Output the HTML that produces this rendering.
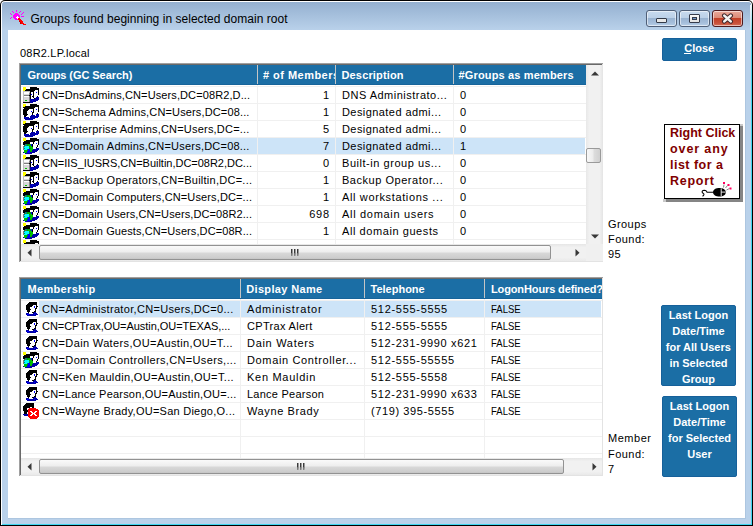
<!DOCTYPE html><html><head><meta charset="utf-8"><style>html,body{margin:0;padding:0;width:753px;height:526px;overflow:hidden;background:#fff}</style></head><body><div style="position:absolute;left:0;top:0;width:753px;height:526px;overflow:hidden">
<div style="position:absolute;left:0px;top:0px;width:753px;height:526px;background:#000;border-radius:5px 5px 0 0"></div>
<div style="position:absolute;left:1px;top:1px;width:751px;height:524px;background:#fff;border-radius:4px 4px 0 0"></div>
<div style="position:absolute;left:2px;top:2px;width:749px;height:522px;background:#b9d1ea;border-radius:3px 3px 0 0"></div>
<div style="position:absolute;left:2px;top:2px;width:749px;height:28px;background:linear-gradient(#94b0d0,#b9d1ea);border-radius:3px 3px 0 0"></div>
<div style="position:absolute;left:751px;top:30px;width:1px;height:495px;background:#3fd6f0"></div>
<div style="position:absolute;left:751px;top:5px;width:1px;height:25px;background:linear-gradient(#e8f6fa,#6fdcf0)"></div>
<div style="position:absolute;left:750px;top:5px;width:1px;height:25px;background:linear-gradient(rgba(255,255,255,.9),rgba(255,255,255,.3))"></div>
<div style="position:absolute;left:2px;top:524px;width:750px;height:1px;background:#3fd6f0"></div>
<div style="position:absolute;left:752px;top:6px;width:1px;height:520px;background:#000"></div>
<div style="position:absolute;left:8px;top:30px;width:737px;height:488px;background:#fff"></div>
<div style="position:absolute;left:745px;top:30px;width:1px;height:489px;background:#adc6e0"></div>
<div style="position:absolute;left:8px;top:518px;width:738px;height:1px;background:#adc6e0"></div>
<svg style="position:absolute;left:9px;top:10px" width="17" height="15" viewBox="0 0 17 15" shape-rendering="crispEdges"><path fill="#ff00ff" d="M7 0h1v1h-1zM3 1h1v1h-1zM7 1h1v1h-1zM11 1h1v1h-1zM4 2h1v1h-1zM10 2h1v1h-1zM14 2h1v1h-1zM1 3h1v1h-1zM6 3h3v1h-3zM13 3h1v1h-1zM2 4h1v1h-1zM5 4h5v1h-5zM12 4h1v1h-1zM4 5h7v1h-7zM4 6h4v1h-4zM9 6h2v1h-2zM12 6h3v1h-3zM2 7h1v1h-1zM4 7h3v1h-3zM10 7h1v1h-1zM1 8h1v1h-1zM5 8h3v1h-3zM6 9h3v1h-3z"/><path fill="#ffffff" d="M8 6h1v1h-1zM7 7h3v1h-3zM8 8h1v1h-1z"/><path fill="#ff0000" d="M9 8h2v1h-2zM9 9h3v1h-3zM10 10h3v1h-3zM11 11h3v1h-3zM12 12h2v1h-2zM12 13h3v1h-3zM14 14h3v1h-3z"/><path fill="#c00000" d="M10 11h1v1h-1zM11 12h1v1h-1zM11 13h1v1h-1z"/></svg>
<div style="position:absolute;left:30.50px;top:12px;font:12px/14px 'Liberation Sans', sans-serif;color:#000;white-space:nowrap;letter-spacing:0.033px;">Groups found beginning in selected domain root</div>
<div style="position:absolute;left:646px;top:10px;width:31px;height:17px;box-sizing:border-box;border:1px solid #4f5f78;border-radius:3px;background:linear-gradient(#c8dbef 0%,#bcd1e8 45%,#9ab4d2 50%,#a6bfdc 80%,#b8cfe8 100%);box-shadow:inset 0 0 0 1px rgba(255,255,255,0.55)"></div>
<div style="position:absolute;left:679px;top:10px;width:31px;height:17px;box-sizing:border-box;border:1px solid #4f5f78;border-radius:3px;background:linear-gradient(#c8dbef 0%,#bcd1e8 45%,#9ab4d2 50%,#a6bfdc 80%,#b8cfe8 100%);box-shadow:inset 0 0 0 1px rgba(255,255,255,0.55)"></div>
<div style="position:absolute;left:712px;top:10px;width:31px;height:17px;box-sizing:border-box;border:1px solid #4d1a1e;border-radius:3px;background:linear-gradient(#e9a99b 0%,#dc8b78 45%,#c24128 50%,#c8503a 80%,#d6705a 100%);box-shadow:inset 0 0 0 1px rgba(255,255,255,0.55)"></div>
<div style="position:absolute;left:656px;top:18px;width:11px;height:5px;box-sizing:border-box;border:1px solid #333a48;border-radius:1px;background:#e8e8e8"></div>
<div style="position:absolute;left:689px;top:14px;width:11px;height:9px;box-sizing:border-box;border:1px solid #363c4c;border-radius:1px;background:linear-gradient(#fafafa,#e2e2e2)"></div>
<div style="position:absolute;left:692px;top:17px;width:5px;height:3px;background:#7096c4;box-sizing:border-box;border:1px solid #363c4c"></div>
<svg style="position:absolute;left:721px;top:13px" width="13" height="11" viewBox="0 0 13 11">
<path d="M3.3 2.6 L9.7 8.4 M9.7 2.6 L3.3 8.4" stroke="#40282c" stroke-width="4.6" stroke-linecap="round"/>
<path d="M3.3 2.6 L9.7 8.4 M9.7 2.6 L3.3 8.4" stroke="#f4f4f4" stroke-width="2.6" stroke-linecap="round"/>
</svg>
<div style="position:absolute;left:20.00px;top:46px;font:11px/14px 'Liberation Sans', sans-serif;color:#000;white-space:nowrap;letter-spacing:0.203px;">08R2.LP.local</div>
<div style="position:absolute;left:19px;top:63px;width:584px;height:199px;background:#fff"></div>
<div style="position:absolute;left:19px;top:63px;width:584px;height:1px;background:#a0a0a0"></div>
<div style="position:absolute;left:19px;top:63px;width:1px;height:199px;background:#a0a0a0"></div>
<div style="position:absolute;left:20px;top:64px;width:583px;height:1px;background:#696969"></div>
<div style="position:absolute;left:20px;top:64px;width:1px;height:198px;background:#696969"></div>
<div style="position:absolute;left:602px;top:64px;width:1px;height:198px;background:#e3e3e3"></div>
<div style="position:absolute;left:20px;top:261px;width:583px;height:1px;background:#e3e3e3"></div>
<div style="position:absolute;left:21px;top:65px;width:565px;height:20px;background:#1b6ea5"></div>
<div style="position:absolute;left:21px;top:84px;width:565px;height:1px;background:#17649a"></div>
<div style="position:absolute;left:21px;top:86px;width:565px;height:1px;background:#f0f0f0"></div>
<div style="position:absolute;left:21px;top:103px;width:565px;height:1px;background:#f0f0f0"></div>
<div style="position:absolute;left:21px;top:120px;width:565px;height:1px;background:#f0f0f0"></div>
<div style="position:absolute;left:21px;top:137px;width:565px;height:1px;background:#f0f0f0"></div>
<div style="position:absolute;left:21px;top:154px;width:565px;height:1px;background:#f0f0f0"></div>
<div style="position:absolute;left:21px;top:171px;width:565px;height:1px;background:#f0f0f0"></div>
<div style="position:absolute;left:21px;top:188px;width:565px;height:1px;background:#f0f0f0"></div>
<div style="position:absolute;left:21px;top:205px;width:565px;height:1px;background:#f0f0f0"></div>
<div style="position:absolute;left:21px;top:222px;width:565px;height:1px;background:#f0f0f0"></div>
<div style="position:absolute;left:21px;top:239px;width:565px;height:1px;background:#f0f0f0"></div>
<div style="position:absolute;left:39px;top:138px;width:546px;height:16px;background:#cde4f8"></div>
<div style="position:absolute;left:257px;top:85px;width:1px;height:159px;background:#f0f0f0"></div>
<div style="position:absolute;left:257px;top:65px;width:1px;height:19px;background:#c5c5c5"></div>
<div style="position:absolute;left:335px;top:85px;width:1px;height:159px;background:#f0f0f0"></div>
<div style="position:absolute;left:335px;top:65px;width:1px;height:19px;background:#c5c5c5"></div>
<div style="position:absolute;left:453px;top:85px;width:1px;height:159px;background:#f0f0f0"></div>
<div style="position:absolute;left:453px;top:65px;width:1px;height:19px;background:#c5c5c5"></div>
<div style="position:absolute;left:21px;top:65px;width:236px;height:19px;overflow:hidden">
<div style="position:absolute;left:6.60px;top:3px;font:bold 11px/14px 'Liberation Sans', sans-serif;color:#fff;white-space:nowrap;letter-spacing:-0.061px;">Groups (GC Search)</div>
</div>
<div style="position:absolute;left:258px;top:65px;width:77px;height:19px;overflow:hidden">
<div style="position:absolute;left:5.00px;top:3px;font:bold 11px/14px 'Liberation Sans', sans-serif;color:#fff;white-space:nowrap;letter-spacing:0.463px;"># of Members</div>
</div>
<div style="position:absolute;left:336px;top:65px;width:117px;height:19px;overflow:hidden">
<div style="position:absolute;left:5.50px;top:3px;font:bold 11px/14px 'Liberation Sans', sans-serif;color:#fff;white-space:nowrap;letter-spacing:0.149px;">Description</div>
</div>
<div style="position:absolute;left:454px;top:65px;width:132px;height:19px;overflow:hidden">
<div style="position:absolute;left:4.60px;top:3px;font:bold 11px/14px 'Liberation Sans', sans-serif;color:#fff;white-space:nowrap;letter-spacing:0.148px;">#Groups as members</div>
</div>
<div style="position:absolute;left:21px;top:87px;width:565px;height:157px;overflow:hidden">
<svg style="position:absolute;left:2px;top:0px" width="16" height="16" viewBox="0 0 16 16" shape-rendering="crispEdges"><path fill="#ffff00" d="M0 0h3v1h-3zM0 1h3v1h-3zM0 2h3v1h-3zM0 3h2v1h-2z"/><path fill="#000000" d="M7 0h7v1h-7zM7 1h9v1h-9zM3 2h13v1h-13zM2 3h10v1h-10zM15 3h1v1h-1zM7 4h4v1h-4zM15 4h1v1h-1zM7 5h1v1h-1zM10 5h1v1h-1zM15 5h1v1h-1zM7 6h1v1h-1zM10 6h1v1h-1zM15 6h1v1h-1zM7 7h1v1h-1zM10 7h1v1h-1zM15 7h1v1h-1zM6 8h2v1h-2zM10 8h1v1h-1zM7 9h1v1h-1zM9 9h2v1h-2zM14 9h1v1h-1zM7 10h1v1h-1zM10 10h1v1h-1zM7 11h1v1h-1zM11 11h1v1h-1zM0 15h7v1h-7z"/><path fill="#ffffff" d="M12 3h3v1h-3zM11 4h4v1h-4zM1 5h5v1h-5zM8 5h2v1h-2zM11 5h2v1h-2zM14 5h1v1h-1zM1 6h5v1h-5zM8 6h2v1h-2zM11 6h4v1h-4zM9 7h1v1h-1zM11 7h4v1h-4zM8 8h2v1h-2zM11 8h4v1h-4zM1 9h5v1h-5zM8 9h1v1h-1zM11 9h3v1h-3zM8 10h2v1h-2zM11 10h2v1h-2zM8 11h3v1h-3z"/><path fill="#c0c0c0" d="M0 4h7v1h-7zM0 5h1v1h-1zM6 5h1v1h-1zM0 6h1v1h-1zM0 7h1v1h-1zM0 8h1v1h-1zM0 9h1v1h-1zM0 10h1v1h-1zM0 11h1v1h-1zM0 12h1v1h-1zM0 13h1v1h-1zM0 14h1v1h-1z"/><path fill="#0000ff" d="M13 5h1v1h-1zM8 7h1v1h-1zM9 13h1v1h-1z"/><path fill="#808080" d="M6 6h1v1h-1zM6 7h1v1h-1zM1 8h5v1h-5zM6 9h1v1h-1zM6 10h1v1h-1zM6 11h1v1h-1zM6 12h1v1h-1zM6 13h1v1h-1zM6 14h1v1h-1z"/><path fill="#d8d8d8" d="M1 7h5v1h-5zM1 10h5v1h-5zM1 11h5v1h-5zM1 12h5v1h-5zM1 13h1v1h-1zM4 13h2v1h-2zM1 14h5v1h-5z"/><path fill="#0000a8" d="M13 10h3v1h-3zM12 11h4v1h-4zM7 12h9v1h-9zM7 13h2v1h-2zM10 13h5v1h-5zM7 14h6v1h-6zM7 15h3v1h-3z"/><path fill="#00c000" d="M2 13h2v1h-2z"/></svg>
<div style="position:absolute;left:21.00px;top:1px;font:11px/14px 'Liberation Sans', sans-serif;color:#000;white-space:nowrap;letter-spacing:0.107px;">CN=DnsAdmins,CN=Users,DC=08R2,D...</div>
<div style="position:absolute;left:301.88px;top:1px;font:11px/14px 'Liberation Sans', sans-serif;color:#000;white-space:nowrap;letter-spacing:0.000px;">1</div>
<div style="position:absolute;left:321.00px;top:1px;font:11px/14px 'Liberation Sans', sans-serif;color:#000;white-space:nowrap;letter-spacing:0.495px;">DNS Administrato...</div>
<div style="position:absolute;left:439.00px;top:1px;font:11px/14px 'Liberation Sans', sans-serif;color:#000;white-space:nowrap;letter-spacing:0.000px;">0</div>
<svg style="position:absolute;left:2px;top:17px" width="16" height="16" viewBox="0 0 16 16" shape-rendering="crispEdges"><path fill="#ffff00" d="M0 0h3v1h-3zM0 1h3v1h-3zM0 2h2v1h-2z"/><path fill="#000000" d="M7 0h7v1h-7zM7 1h9v1h-9zM2 2h14v1h-14zM0 3h12v1h-12zM15 3h1v1h-1zM1 4h10v1h-10zM15 4h1v1h-1zM0 5h6v1h-6zM10 5h1v1h-1zM15 5h1v1h-1zM0 6h5v1h-5zM10 6h1v1h-1zM15 6h1v1h-1zM0 7h4v1h-4zM10 7h1v1h-1zM15 7h1v1h-1zM0 8h4v1h-4zM9 8h2v1h-2zM0 9h4v1h-4zM9 9h1v1h-1zM14 9h1v1h-1zM0 10h5v1h-5zM9 10h1v1h-1zM1 11h3v1h-3zM1 12h2v1h-2z"/><path fill="#ffffff" d="M12 3h3v1h-3zM11 4h4v1h-4zM6 5h4v1h-4zM11 5h2v1h-2zM14 5h1v1h-1zM5 6h5v1h-5zM11 6h4v1h-4zM4 7h4v1h-4zM9 7h1v1h-1zM11 7h4v1h-4zM4 8h5v1h-5zM11 8h4v1h-4zM4 9h5v1h-5zM10 9h4v1h-4zM5 10h4v1h-4zM10 10h3v1h-3zM4 11h4v1h-4zM12 11h1v1h-1zM3 12h4v1h-4zM6 13h1v1h-1z"/><path fill="#0000ff" d="M13 5h1v1h-1zM8 7h1v1h-1zM2 13h1v1h-1zM13 13h1v1h-1z"/><path fill="#0000a8" d="M13 10h3v1h-3zM8 11h4v1h-4zM13 11h3v1h-3zM7 12h9v1h-9zM1 13h1v1h-1zM3 13h3v1h-3zM7 13h6v1h-6zM14 13h1v1h-1zM1 14h11v1h-11zM2 15h8v1h-8z"/></svg>
<div style="position:absolute;left:21.00px;top:18px;font:11px/14px 'Liberation Sans', sans-serif;color:#000;white-space:nowrap;letter-spacing:0.144px;">CN=Schema Admins,CN=Users,DC=08...</div>
<div style="position:absolute;left:301.88px;top:18px;font:11px/14px 'Liberation Sans', sans-serif;color:#000;white-space:nowrap;letter-spacing:0.000px;">1</div>
<div style="position:absolute;left:321.00px;top:18px;font:11px/14px 'Liberation Sans', sans-serif;color:#000;white-space:nowrap;letter-spacing:0.428px;">Designated admi...</div>
<div style="position:absolute;left:439.00px;top:18px;font:11px/14px 'Liberation Sans', sans-serif;color:#000;white-space:nowrap;letter-spacing:0.000px;">0</div>
<svg style="position:absolute;left:2px;top:34px" width="16" height="16" viewBox="0 0 16 16" shape-rendering="crispEdges"><path fill="#ffff00" d="M0 0h3v1h-3zM0 1h3v1h-3zM0 2h2v1h-2z"/><path fill="#000000" d="M7 0h7v1h-7zM7 1h9v1h-9zM2 2h14v1h-14zM0 3h12v1h-12zM15 3h1v1h-1zM1 4h10v1h-10zM15 4h1v1h-1zM0 5h6v1h-6zM10 5h1v1h-1zM15 5h1v1h-1zM0 6h5v1h-5zM10 6h1v1h-1zM15 6h1v1h-1zM0 7h4v1h-4zM10 7h1v1h-1zM15 7h1v1h-1zM0 8h4v1h-4zM9 8h2v1h-2zM0 9h4v1h-4zM9 9h1v1h-1zM14 9h1v1h-1zM0 10h5v1h-5zM9 10h1v1h-1zM1 11h3v1h-3zM1 12h2v1h-2z"/><path fill="#ffffff" d="M12 3h3v1h-3zM11 4h4v1h-4zM6 5h4v1h-4zM11 5h2v1h-2zM14 5h1v1h-1zM5 6h5v1h-5zM11 6h4v1h-4zM4 7h4v1h-4zM9 7h1v1h-1zM11 7h4v1h-4zM4 8h5v1h-5zM11 8h4v1h-4zM4 9h5v1h-5zM10 9h4v1h-4zM5 10h4v1h-4zM10 10h3v1h-3zM4 11h4v1h-4zM12 11h1v1h-1zM3 12h4v1h-4zM6 13h1v1h-1z"/><path fill="#0000ff" d="M13 5h1v1h-1zM8 7h1v1h-1zM2 13h1v1h-1zM13 13h1v1h-1z"/><path fill="#0000a8" d="M13 10h3v1h-3zM8 11h4v1h-4zM13 11h3v1h-3zM7 12h9v1h-9zM1 13h1v1h-1zM3 13h3v1h-3zM7 13h6v1h-6zM14 13h1v1h-1zM1 14h11v1h-11zM2 15h8v1h-8z"/></svg>
<div style="position:absolute;left:21.00px;top:35px;font:11px/14px 'Liberation Sans', sans-serif;color:#000;white-space:nowrap;letter-spacing:0.205px;">CN=Enterprise Admins,CN=Users,DC=...</div>
<div style="position:absolute;left:301.88px;top:35px;font:11px/14px 'Liberation Sans', sans-serif;color:#000;white-space:nowrap;letter-spacing:0.000px;">5</div>
<div style="position:absolute;left:321.00px;top:35px;font:11px/14px 'Liberation Sans', sans-serif;color:#000;white-space:nowrap;letter-spacing:0.428px;">Designated admi...</div>
<div style="position:absolute;left:439.00px;top:35px;font:11px/14px 'Liberation Sans', sans-serif;color:#000;white-space:nowrap;letter-spacing:0.000px;">0</div>
<svg style="position:absolute;left:2px;top:51px" width="16" height="16" viewBox="0 0 16 16" shape-rendering="crispEdges"><path fill="#ffff00" d="M0 0h3v1h-3zM0 1h3v1h-3zM0 2h3v1h-3z"/><path fill="#000000" d="M7 0h7v1h-7zM7 1h9v1h-9zM3 2h13v1h-13zM1 3h11v1h-11zM15 3h1v1h-1zM0 4h7v1h-7zM10 4h1v1h-1zM15 4h1v1h-1zM0 5h7v1h-7zM10 5h1v1h-1zM15 5h1v1h-1zM0 6h2v1h-2zM9 6h1v1h-1zM15 6h1v1h-1zM9 7h1v1h-1zM14 7h1v1h-1zM9 8h1v1h-1zM14 8h1v1h-1zM13 9h1v1h-1z"/><path fill="#ffffff" d="M12 3h3v1h-3zM7 4h3v1h-3zM11 4h4v1h-4zM7 5h3v1h-3zM11 5h2v1h-2zM14 5h1v1h-1zM10 6h5v1h-5zM10 7h4v1h-4zM10 8h4v1h-4zM10 9h3v1h-3zM10 10h3v1h-3z"/><path fill="#0000ff" d="M13 5h1v1h-1zM8 6h1v1h-1zM8 7h1v1h-1zM5 11h2v1h-2zM5 12h2v1h-2zM4 13h3v1h-3zM4 14h3v1h-3z"/><path fill="#008080" d="M2 6h2v1h-2zM1 7h1v1h-1zM3 7h1v1h-1zM1 8h1v1h-1zM6 9h1v1h-1zM1 10h1v1h-1zM4 11h1v1h-1z"/><path fill="#00a000" d="M4 6h4v1h-4zM4 7h1v1h-1zM7 7h1v1h-1zM6 8h1v1h-1zM6 10h2v1h-2zM4 12h1v1h-1zM7 13h2v1h-2zM3 14h1v1h-1z"/><path fill="#808000" d="M2 7h1v1h-1z"/><path fill="#00c000" d="M5 7h2v1h-2zM7 8h2v1h-2zM7 9h3v1h-3zM8 10h2v1h-2zM7 11h3v1h-3zM1 12h3v1h-3zM7 12h2v1h-2zM1 13h3v1h-3zM1 14h2v1h-2z"/><path fill="#808080" d="M0 8h1v1h-1zM0 9h1v1h-1zM0 10h1v1h-1zM0 11h1v1h-1z"/><path fill="#00ffff" d="M2 8h4v1h-4zM1 9h5v1h-5zM2 10h4v1h-4zM1 11h3v1h-3z"/><path fill="#0000a8" d="M13 10h3v1h-3zM10 11h6v1h-6zM9 12h6v1h-6zM9 13h5v1h-5zM0 14h1v1h-1zM7 14h5v1h-5zM2 15h7v1h-7z"/></svg>
<div style="position:absolute;left:21.00px;top:52px;font:11px/14px 'Liberation Sans', sans-serif;color:#000;white-space:nowrap;letter-spacing:0.218px;">CN=Domain Admins,CN=Users,DC=08...</div>
<div style="position:absolute;left:301.88px;top:52px;font:11px/14px 'Liberation Sans', sans-serif;color:#000;white-space:nowrap;letter-spacing:0.000px;">7</div>
<div style="position:absolute;left:321.00px;top:52px;font:11px/14px 'Liberation Sans', sans-serif;color:#000;white-space:nowrap;letter-spacing:0.428px;">Designated admi...</div>
<div style="position:absolute;left:439.00px;top:52px;font:11px/14px 'Liberation Sans', sans-serif;color:#000;white-space:nowrap;letter-spacing:0.000px;">1</div>
<svg style="position:absolute;left:2px;top:68px" width="16" height="16" viewBox="0 0 16 16" shape-rendering="crispEdges"><path fill="#ffff00" d="M0 0h3v1h-3zM0 1h3v1h-3zM0 2h3v1h-3zM0 3h2v1h-2z"/><path fill="#000000" d="M7 0h7v1h-7zM7 1h9v1h-9zM3 2h13v1h-13zM2 3h10v1h-10zM15 3h1v1h-1zM7 4h4v1h-4zM15 4h1v1h-1zM7 5h1v1h-1zM10 5h1v1h-1zM15 5h1v1h-1zM7 6h1v1h-1zM10 6h1v1h-1zM15 6h1v1h-1zM7 7h1v1h-1zM10 7h1v1h-1zM15 7h1v1h-1zM6 8h2v1h-2zM10 8h1v1h-1zM7 9h1v1h-1zM9 9h2v1h-2zM14 9h1v1h-1zM7 10h1v1h-1zM10 10h1v1h-1zM7 11h1v1h-1zM11 11h1v1h-1zM0 15h7v1h-7z"/><path fill="#ffffff" d="M12 3h3v1h-3zM11 4h4v1h-4zM1 5h5v1h-5zM8 5h2v1h-2zM11 5h2v1h-2zM14 5h1v1h-1zM1 6h5v1h-5zM8 6h2v1h-2zM11 6h4v1h-4zM9 7h1v1h-1zM11 7h4v1h-4zM8 8h2v1h-2zM11 8h4v1h-4zM1 9h5v1h-5zM8 9h1v1h-1zM11 9h3v1h-3zM8 10h2v1h-2zM11 10h2v1h-2zM8 11h3v1h-3z"/><path fill="#c0c0c0" d="M0 4h7v1h-7zM0 5h1v1h-1zM6 5h1v1h-1zM0 6h1v1h-1zM0 7h1v1h-1zM0 8h1v1h-1zM0 9h1v1h-1zM0 10h1v1h-1zM0 11h1v1h-1zM0 12h1v1h-1zM0 13h1v1h-1zM0 14h1v1h-1z"/><path fill="#0000ff" d="M13 5h1v1h-1zM8 7h1v1h-1zM9 13h1v1h-1z"/><path fill="#808080" d="M6 6h1v1h-1zM6 7h1v1h-1zM1 8h5v1h-5zM6 9h1v1h-1zM6 10h1v1h-1zM6 11h1v1h-1zM6 12h1v1h-1zM6 13h1v1h-1zM6 14h1v1h-1z"/><path fill="#d8d8d8" d="M1 7h5v1h-5zM1 10h5v1h-5zM1 11h5v1h-5zM1 12h5v1h-5zM1 13h1v1h-1zM4 13h2v1h-2zM1 14h5v1h-5z"/><path fill="#0000a8" d="M13 10h3v1h-3zM12 11h4v1h-4zM7 12h9v1h-9zM7 13h2v1h-2zM10 13h5v1h-5zM7 14h6v1h-6zM7 15h3v1h-3z"/><path fill="#00c000" d="M2 13h2v1h-2z"/></svg>
<div style="position:absolute;left:21.00px;top:69px;font:11px/14px 'Liberation Sans', sans-serif;color:#000;white-space:nowrap;letter-spacing:-0.017px;">CN=IIS_IUSRS,CN=Builtin,DC=08R2,DC...</div>
<div style="position:absolute;left:301.88px;top:69px;font:11px/14px 'Liberation Sans', sans-serif;color:#000;white-space:nowrap;letter-spacing:0.000px;">0</div>
<div style="position:absolute;left:321.00px;top:69px;font:11px/14px 'Liberation Sans', sans-serif;color:#000;white-space:nowrap;letter-spacing:0.544px;">Built-in group us...</div>
<div style="position:absolute;left:439.00px;top:69px;font:11px/14px 'Liberation Sans', sans-serif;color:#000;white-space:nowrap;letter-spacing:0.000px;">0</div>
<svg style="position:absolute;left:2px;top:85px" width="16" height="16" viewBox="0 0 16 16" shape-rendering="crispEdges"><path fill="#ffff00" d="M0 0h3v1h-3zM0 1h3v1h-3zM0 2h3v1h-3zM0 3h2v1h-2z"/><path fill="#000000" d="M7 0h7v1h-7zM7 1h9v1h-9zM3 2h13v1h-13zM2 3h10v1h-10zM15 3h1v1h-1zM7 4h4v1h-4zM15 4h1v1h-1zM7 5h1v1h-1zM10 5h1v1h-1zM15 5h1v1h-1zM7 6h1v1h-1zM10 6h1v1h-1zM15 6h1v1h-1zM7 7h1v1h-1zM10 7h1v1h-1zM15 7h1v1h-1zM6 8h2v1h-2zM10 8h1v1h-1zM7 9h1v1h-1zM9 9h2v1h-2zM14 9h1v1h-1zM7 10h1v1h-1zM10 10h1v1h-1zM7 11h1v1h-1zM11 11h1v1h-1zM0 15h7v1h-7z"/><path fill="#ffffff" d="M12 3h3v1h-3zM11 4h4v1h-4zM1 5h5v1h-5zM8 5h2v1h-2zM11 5h2v1h-2zM14 5h1v1h-1zM1 6h5v1h-5zM8 6h2v1h-2zM11 6h4v1h-4zM9 7h1v1h-1zM11 7h4v1h-4zM8 8h2v1h-2zM11 8h4v1h-4zM1 9h5v1h-5zM8 9h1v1h-1zM11 9h3v1h-3zM8 10h2v1h-2zM11 10h2v1h-2zM8 11h3v1h-3z"/><path fill="#c0c0c0" d="M0 4h7v1h-7zM0 5h1v1h-1zM6 5h1v1h-1zM0 6h1v1h-1zM0 7h1v1h-1zM0 8h1v1h-1zM0 9h1v1h-1zM0 10h1v1h-1zM0 11h1v1h-1zM0 12h1v1h-1zM0 13h1v1h-1zM0 14h1v1h-1z"/><path fill="#0000ff" d="M13 5h1v1h-1zM8 7h1v1h-1zM9 13h1v1h-1z"/><path fill="#808080" d="M6 6h1v1h-1zM6 7h1v1h-1zM1 8h5v1h-5zM6 9h1v1h-1zM6 10h1v1h-1zM6 11h1v1h-1zM6 12h1v1h-1zM6 13h1v1h-1zM6 14h1v1h-1z"/><path fill="#d8d8d8" d="M1 7h5v1h-5zM1 10h5v1h-5zM1 11h5v1h-5zM1 12h5v1h-5zM1 13h1v1h-1zM4 13h2v1h-2zM1 14h5v1h-5z"/><path fill="#0000a8" d="M13 10h3v1h-3zM12 11h4v1h-4zM7 12h9v1h-9zM7 13h2v1h-2zM10 13h5v1h-5zM7 14h6v1h-6zM7 15h3v1h-3z"/><path fill="#00c000" d="M2 13h2v1h-2z"/></svg>
<div style="position:absolute;left:21.00px;top:86px;font:11px/14px 'Liberation Sans', sans-serif;color:#000;white-space:nowrap;letter-spacing:0.255px;">CN=Backup Operators,CN=Builtin,DC=...</div>
<div style="position:absolute;left:301.88px;top:86px;font:11px/14px 'Liberation Sans', sans-serif;color:#000;white-space:nowrap;letter-spacing:0.000px;">1</div>
<div style="position:absolute;left:321.00px;top:86px;font:11px/14px 'Liberation Sans', sans-serif;color:#000;white-space:nowrap;letter-spacing:0.528px;">Backup Operator...</div>
<div style="position:absolute;left:439.00px;top:86px;font:11px/14px 'Liberation Sans', sans-serif;color:#000;white-space:nowrap;letter-spacing:0.000px;">0</div>
<svg style="position:absolute;left:2px;top:102px" width="16" height="16" viewBox="0 0 16 16" shape-rendering="crispEdges"><path fill="#ffff00" d="M0 0h3v1h-3zM0 1h3v1h-3zM0 2h3v1h-3z"/><path fill="#000000" d="M7 0h7v1h-7zM7 1h9v1h-9zM3 2h13v1h-13zM1 3h11v1h-11zM15 3h1v1h-1zM0 4h7v1h-7zM10 4h1v1h-1zM15 4h1v1h-1zM0 5h7v1h-7zM10 5h1v1h-1zM15 5h1v1h-1zM0 6h2v1h-2zM9 6h1v1h-1zM15 6h1v1h-1zM9 7h1v1h-1zM14 7h1v1h-1zM9 8h1v1h-1zM14 8h1v1h-1zM13 9h1v1h-1z"/><path fill="#ffffff" d="M12 3h3v1h-3zM7 4h3v1h-3zM11 4h4v1h-4zM7 5h3v1h-3zM11 5h2v1h-2zM14 5h1v1h-1zM10 6h5v1h-5zM10 7h4v1h-4zM10 8h4v1h-4zM10 9h3v1h-3zM10 10h3v1h-3z"/><path fill="#0000ff" d="M13 5h1v1h-1zM8 6h1v1h-1zM8 7h1v1h-1zM5 11h2v1h-2zM5 12h2v1h-2zM4 13h3v1h-3zM4 14h3v1h-3z"/><path fill="#008080" d="M2 6h2v1h-2zM1 7h1v1h-1zM3 7h1v1h-1zM1 8h1v1h-1zM6 9h1v1h-1zM1 10h1v1h-1zM4 11h1v1h-1z"/><path fill="#00a000" d="M4 6h4v1h-4zM4 7h1v1h-1zM7 7h1v1h-1zM6 8h1v1h-1zM6 10h2v1h-2zM4 12h1v1h-1zM7 13h2v1h-2zM3 14h1v1h-1z"/><path fill="#808000" d="M2 7h1v1h-1z"/><path fill="#00c000" d="M5 7h2v1h-2zM7 8h2v1h-2zM7 9h3v1h-3zM8 10h2v1h-2zM7 11h3v1h-3zM1 12h3v1h-3zM7 12h2v1h-2zM1 13h3v1h-3zM1 14h2v1h-2z"/><path fill="#808080" d="M0 8h1v1h-1zM0 9h1v1h-1zM0 10h1v1h-1zM0 11h1v1h-1z"/><path fill="#00ffff" d="M2 8h4v1h-4zM1 9h5v1h-5zM2 10h4v1h-4zM1 11h3v1h-3z"/><path fill="#0000a8" d="M13 10h3v1h-3zM10 11h6v1h-6zM9 12h6v1h-6zM9 13h5v1h-5zM0 14h1v1h-1zM7 14h5v1h-5zM2 15h7v1h-7z"/></svg>
<div style="position:absolute;left:21.00px;top:103px;font:11px/14px 'Liberation Sans', sans-serif;color:#000;white-space:nowrap;letter-spacing:0.127px;">CN=Domain Computers,CN=Users,DC=...</div>
<div style="position:absolute;left:301.88px;top:103px;font:11px/14px 'Liberation Sans', sans-serif;color:#000;white-space:nowrap;letter-spacing:0.000px;">1</div>
<div style="position:absolute;left:321.00px;top:103px;font:11px/14px 'Liberation Sans', sans-serif;color:#000;white-space:nowrap;letter-spacing:0.635px;">All workstations ...</div>
<div style="position:absolute;left:439.00px;top:103px;font:11px/14px 'Liberation Sans', sans-serif;color:#000;white-space:nowrap;letter-spacing:0.000px;">0</div>
<svg style="position:absolute;left:2px;top:119px" width="16" height="16" viewBox="0 0 16 16" shape-rendering="crispEdges"><path fill="#ffff00" d="M0 0h3v1h-3zM0 1h3v1h-3zM0 2h3v1h-3z"/><path fill="#000000" d="M7 0h7v1h-7zM7 1h9v1h-9zM3 2h13v1h-13zM1 3h11v1h-11zM15 3h1v1h-1zM0 4h7v1h-7zM10 4h1v1h-1zM15 4h1v1h-1zM0 5h7v1h-7zM10 5h1v1h-1zM15 5h1v1h-1zM0 6h2v1h-2zM9 6h1v1h-1zM15 6h1v1h-1zM9 7h1v1h-1zM14 7h1v1h-1zM9 8h1v1h-1zM14 8h1v1h-1zM13 9h1v1h-1z"/><path fill="#ffffff" d="M12 3h3v1h-3zM7 4h3v1h-3zM11 4h4v1h-4zM7 5h3v1h-3zM11 5h2v1h-2zM14 5h1v1h-1zM10 6h5v1h-5zM10 7h4v1h-4zM10 8h4v1h-4zM10 9h3v1h-3zM10 10h3v1h-3z"/><path fill="#0000ff" d="M13 5h1v1h-1zM8 6h1v1h-1zM8 7h1v1h-1zM5 11h2v1h-2zM5 12h2v1h-2zM4 13h3v1h-3zM4 14h3v1h-3z"/><path fill="#008080" d="M2 6h2v1h-2zM1 7h1v1h-1zM3 7h1v1h-1zM1 8h1v1h-1zM6 9h1v1h-1zM1 10h1v1h-1zM4 11h1v1h-1z"/><path fill="#00a000" d="M4 6h4v1h-4zM4 7h1v1h-1zM7 7h1v1h-1zM6 8h1v1h-1zM6 10h2v1h-2zM4 12h1v1h-1zM7 13h2v1h-2zM3 14h1v1h-1z"/><path fill="#808000" d="M2 7h1v1h-1z"/><path fill="#00c000" d="M5 7h2v1h-2zM7 8h2v1h-2zM7 9h3v1h-3zM8 10h2v1h-2zM7 11h3v1h-3zM1 12h3v1h-3zM7 12h2v1h-2zM1 13h3v1h-3zM1 14h2v1h-2z"/><path fill="#808080" d="M0 8h1v1h-1zM0 9h1v1h-1zM0 10h1v1h-1zM0 11h1v1h-1z"/><path fill="#00ffff" d="M2 8h4v1h-4zM1 9h5v1h-5zM2 10h4v1h-4zM1 11h3v1h-3z"/><path fill="#0000a8" d="M13 10h3v1h-3zM10 11h6v1h-6zM9 12h6v1h-6zM9 13h5v1h-5zM0 14h1v1h-1zM7 14h5v1h-5zM2 15h7v1h-7z"/></svg>
<div style="position:absolute;left:21.00px;top:120px;font:11px/14px 'Liberation Sans', sans-serif;color:#000;white-space:nowrap;letter-spacing:0.091px;">CN=Domain Users,CN=Users,DC=08R2...</div>
<div style="position:absolute;left:288.36px;top:120px;font:11px/14px 'Liberation Sans', sans-serif;color:#000;white-space:nowrap;letter-spacing:0.642px;">698</div>
<div style="position:absolute;left:321.00px;top:120px;font:11px/14px 'Liberation Sans', sans-serif;color:#000;white-space:nowrap;letter-spacing:0.686px;">All domain users</div>
<div style="position:absolute;left:439.00px;top:120px;font:11px/14px 'Liberation Sans', sans-serif;color:#000;white-space:nowrap;letter-spacing:0.000px;">0</div>
<svg style="position:absolute;left:2px;top:136px" width="16" height="16" viewBox="0 0 16 16" shape-rendering="crispEdges"><path fill="#ffff00" d="M0 0h3v1h-3zM0 1h3v1h-3zM0 2h3v1h-3z"/><path fill="#000000" d="M7 0h7v1h-7zM7 1h9v1h-9zM3 2h13v1h-13zM1 3h11v1h-11zM15 3h1v1h-1zM0 4h7v1h-7zM10 4h1v1h-1zM15 4h1v1h-1zM0 5h7v1h-7zM10 5h1v1h-1zM15 5h1v1h-1zM0 6h2v1h-2zM9 6h1v1h-1zM15 6h1v1h-1zM9 7h1v1h-1zM14 7h1v1h-1zM9 8h1v1h-1zM14 8h1v1h-1zM13 9h1v1h-1z"/><path fill="#ffffff" d="M12 3h3v1h-3zM7 4h3v1h-3zM11 4h4v1h-4zM7 5h3v1h-3zM11 5h2v1h-2zM14 5h1v1h-1zM10 6h5v1h-5zM10 7h4v1h-4zM10 8h4v1h-4zM10 9h3v1h-3zM10 10h3v1h-3z"/><path fill="#0000ff" d="M13 5h1v1h-1zM8 6h1v1h-1zM8 7h1v1h-1zM5 11h2v1h-2zM5 12h2v1h-2zM4 13h3v1h-3zM4 14h3v1h-3z"/><path fill="#008080" d="M2 6h2v1h-2zM1 7h1v1h-1zM3 7h1v1h-1zM1 8h1v1h-1zM6 9h1v1h-1zM1 10h1v1h-1zM4 11h1v1h-1z"/><path fill="#00a000" d="M4 6h4v1h-4zM4 7h1v1h-1zM7 7h1v1h-1zM6 8h1v1h-1zM6 10h2v1h-2zM4 12h1v1h-1zM7 13h2v1h-2zM3 14h1v1h-1z"/><path fill="#808000" d="M2 7h1v1h-1z"/><path fill="#00c000" d="M5 7h2v1h-2zM7 8h2v1h-2zM7 9h3v1h-3zM8 10h2v1h-2zM7 11h3v1h-3zM1 12h3v1h-3zM7 12h2v1h-2zM1 13h3v1h-3zM1 14h2v1h-2z"/><path fill="#808080" d="M0 8h1v1h-1zM0 9h1v1h-1zM0 10h1v1h-1zM0 11h1v1h-1z"/><path fill="#00ffff" d="M2 8h4v1h-4zM1 9h5v1h-5zM2 10h4v1h-4zM1 11h3v1h-3z"/><path fill="#0000a8" d="M13 10h3v1h-3zM10 11h6v1h-6zM9 12h6v1h-6zM9 13h5v1h-5zM0 14h1v1h-1zM7 14h5v1h-5zM2 15h7v1h-7z"/></svg>
<div style="position:absolute;left:21.00px;top:137px;font:11px/14px 'Liberation Sans', sans-serif;color:#000;white-space:nowrap;letter-spacing:0.090px;">CN=Domain Guests,CN=Users,DC=08R...</div>
<div style="position:absolute;left:301.88px;top:137px;font:11px/14px 'Liberation Sans', sans-serif;color:#000;white-space:nowrap;letter-spacing:0.000px;">1</div>
<div style="position:absolute;left:321.00px;top:137px;font:11px/14px 'Liberation Sans', sans-serif;color:#000;white-space:nowrap;letter-spacing:0.574px;">All domain guests</div>
<div style="position:absolute;left:439.00px;top:137px;font:11px/14px 'Liberation Sans', sans-serif;color:#000;white-space:nowrap;letter-spacing:0.000px;">0</div>
<svg style="position:absolute;left:2px;top:153px" width="16" height="16" viewBox="0 0 16 16" shape-rendering="crispEdges"><path fill="#ffff00" d="M0 0h3v1h-3zM0 1h3v1h-3zM0 2h3v1h-3z"/><path fill="#000000" d="M7 0h7v1h-7zM7 1h9v1h-9zM3 2h13v1h-13zM1 3h11v1h-11zM15 3h1v1h-1zM0 4h7v1h-7zM10 4h1v1h-1zM15 4h1v1h-1zM0 5h7v1h-7zM10 5h1v1h-1zM15 5h1v1h-1zM0 6h2v1h-2zM9 6h1v1h-1zM15 6h1v1h-1zM9 7h1v1h-1zM14 7h1v1h-1zM9 8h1v1h-1zM14 8h1v1h-1zM13 9h1v1h-1z"/><path fill="#ffffff" d="M12 3h3v1h-3zM7 4h3v1h-3zM11 4h4v1h-4zM7 5h3v1h-3zM11 5h2v1h-2zM14 5h1v1h-1zM10 6h5v1h-5zM10 7h4v1h-4zM10 8h4v1h-4zM10 9h3v1h-3zM10 10h3v1h-3z"/><path fill="#0000ff" d="M13 5h1v1h-1zM8 6h1v1h-1zM8 7h1v1h-1zM5 11h2v1h-2zM5 12h2v1h-2zM4 13h3v1h-3zM4 14h3v1h-3z"/><path fill="#008080" d="M2 6h2v1h-2zM1 7h1v1h-1zM3 7h1v1h-1zM1 8h1v1h-1zM6 9h1v1h-1zM1 10h1v1h-1zM4 11h1v1h-1z"/><path fill="#00a000" d="M4 6h4v1h-4zM4 7h1v1h-1zM7 7h1v1h-1zM6 8h1v1h-1zM6 10h2v1h-2zM4 12h1v1h-1zM7 13h2v1h-2zM3 14h1v1h-1z"/><path fill="#808000" d="M2 7h1v1h-1z"/><path fill="#00c000" d="M5 7h2v1h-2zM7 8h2v1h-2zM7 9h3v1h-3zM8 10h2v1h-2zM7 11h3v1h-3zM1 12h3v1h-3zM7 12h2v1h-2zM1 13h3v1h-3zM1 14h2v1h-2z"/><path fill="#808080" d="M0 8h1v1h-1zM0 9h1v1h-1zM0 10h1v1h-1zM0 11h1v1h-1z"/><path fill="#00ffff" d="M2 8h4v1h-4zM1 9h5v1h-5zM2 10h4v1h-4zM1 11h3v1h-3z"/><path fill="#0000a8" d="M13 10h3v1h-3zM10 11h6v1h-6zM9 12h6v1h-6zM9 13h5v1h-5zM0 14h1v1h-1zM7 14h5v1h-5zM2 15h7v1h-7z"/></svg>
<div style="position:absolute;left:21.00px;top:154px;font:11px/14px 'Liberation Sans', sans-serif;color:#000;white-space:nowrap;letter-spacing:0.137px;">CN=Domain Controllers,CN=Users,DC=...</div>
<div style="position:absolute;left:301.88px;top:154px;font:11px/14px 'Liberation Sans', sans-serif;color:#000;white-space:nowrap;letter-spacing:0.000px;">1</div>
<div style="position:absolute;left:321.00px;top:154px;font:11px/14px 'Liberation Sans', sans-serif;color:#000;white-space:nowrap;letter-spacing:0.437px;">All domain contr...</div>
<div style="position:absolute;left:439.00px;top:154px;font:11px/14px 'Liberation Sans', sans-serif;color:#000;white-space:nowrap;letter-spacing:0.000px;">0</div>
</div>
<div style="position:absolute;left:21px;top:244px;width:565px;height:17px;background:linear-gradient(#e6e6e6,#f1f1f1 20%,#f1f1f1 80%,#e9e9e9)"></div>
<svg style="position:absolute;left:27px;top:249px" width="5" height="8" viewBox="0 0 5 8"><path d="M4.5 0 L0.5 3.75 L4.5 7.5 Z" fill="#383838"/></svg>
<svg style="position:absolute;left:575px;top:249px" width="5" height="8" viewBox="0 0 5 8"><path d="M0.5 0 L4.5 3.75 L0.5 7.5 Z" fill="#383838"/></svg>
<div style="position:absolute;left:39px;top:245px;width:512px;height:15px;box-sizing:border-box;border:1px solid #929292;border-radius:2px;background:linear-gradient(#fafafa,#ededed 48%,#d9d9d9 52%,#cdcdcd 90%,#c4c4c4)"></div>
<div style="position:absolute;left:291px;top:249px;width:2px;height:7px;background:linear-gradient(90deg,#3a3a3a 50%,#9a9a9a 50%);"></div>
<div style="position:absolute;left:291px;top:253px;width:2px;height:3px;background:linear-gradient(#8a8a8a,#c0c0c0);opacity:.6"></div>
<div style="position:absolute;left:294px;top:249px;width:2px;height:7px;background:linear-gradient(90deg,#3a3a3a 50%,#9a9a9a 50%);"></div>
<div style="position:absolute;left:294px;top:253px;width:2px;height:3px;background:linear-gradient(#8a8a8a,#c0c0c0);opacity:.6"></div>
<div style="position:absolute;left:297px;top:249px;width:2px;height:7px;background:linear-gradient(90deg,#3a3a3a 50%,#9a9a9a 50%);"></div>
<div style="position:absolute;left:297px;top:253px;width:2px;height:3px;background:linear-gradient(#8a8a8a,#c0c0c0);opacity:.6"></div>
<div style="position:absolute;left:586px;top:65px;width:17px;height:179px;background:linear-gradient(90deg,#e8e8e8,#f1f1f1 20%,#f1f1f1 80%,#e4e4e4)"></div>
<div style="position:absolute;left:586px;top:244px;width:17px;height:17px;background:#f0f0f0"></div>
<svg style="position:absolute;left:591px;top:71px" width="8" height="5" viewBox="0 0 8 5"><path d="M0 4.5 L4 0.5 L8 4.5 Z" fill="#383838"/></svg>
<svg style="position:absolute;left:591px;top:234px" width="8" height="5" viewBox="0 0 8 5"><path d="M0 0.5 L4 4.5 L8 0.5 Z" fill="#383838"/></svg>
<div style="position:absolute;left:586px;top:148px;width:15px;height:15px;box-sizing:border-box;border:1px solid #9a9a9a;border-radius:2px;background:linear-gradient(90deg,#f8f8f8,#ececec 45%,#dcdcdc 55%,#d0d0d0)"></div>
<div style="position:absolute;left:19px;top:277px;width:584px;height:199px;background:#fff"></div>
<div style="position:absolute;left:19px;top:277px;width:584px;height:1px;background:#a0a0a0"></div>
<div style="position:absolute;left:19px;top:277px;width:1px;height:199px;background:#a0a0a0"></div>
<div style="position:absolute;left:20px;top:278px;width:583px;height:1px;background:#696969"></div>
<div style="position:absolute;left:20px;top:278px;width:1px;height:198px;background:#696969"></div>
<div style="position:absolute;left:602px;top:278px;width:1px;height:198px;background:#e3e3e3"></div>
<div style="position:absolute;left:20px;top:475px;width:583px;height:1px;background:#e3e3e3"></div>
<div style="position:absolute;left:21px;top:279px;width:581px;height:20px;background:#1b6ea5"></div>
<div style="position:absolute;left:21px;top:298px;width:581px;height:1px;background:#17649a"></div>
<div style="position:absolute;left:21px;top:300px;width:581px;height:1px;background:#f0f0f0"></div>
<div style="position:absolute;left:21px;top:317px;width:581px;height:1px;background:#f0f0f0"></div>
<div style="position:absolute;left:21px;top:334px;width:581px;height:1px;background:#f0f0f0"></div>
<div style="position:absolute;left:21px;top:351px;width:581px;height:1px;background:#f0f0f0"></div>
<div style="position:absolute;left:21px;top:368px;width:581px;height:1px;background:#f0f0f0"></div>
<div style="position:absolute;left:21px;top:385px;width:581px;height:1px;background:#f0f0f0"></div>
<div style="position:absolute;left:21px;top:402px;width:581px;height:1px;background:#f0f0f0"></div>
<div style="position:absolute;left:21px;top:419px;width:581px;height:1px;background:#f0f0f0"></div>
<div style="position:absolute;left:21px;top:436px;width:581px;height:1px;background:#f0f0f0"></div>
<div style="position:absolute;left:21px;top:453px;width:581px;height:1px;background:#f0f0f0"></div>
<div style="position:absolute;left:39px;top:301px;width:562px;height:16px;background:#cde4f8"></div>
<div style="position:absolute;left:240px;top:299px;width:1px;height:159px;background:#f0f0f0"></div>
<div style="position:absolute;left:240px;top:279px;width:1px;height:19px;background:#c5c5c5"></div>
<div style="position:absolute;left:364px;top:299px;width:1px;height:159px;background:#f0f0f0"></div>
<div style="position:absolute;left:364px;top:279px;width:1px;height:19px;background:#c5c5c5"></div>
<div style="position:absolute;left:484px;top:299px;width:1px;height:159px;background:#f0f0f0"></div>
<div style="position:absolute;left:484px;top:279px;width:1px;height:19px;background:#c5c5c5"></div>
<div style="position:absolute;left:21px;top:279px;width:219px;height:19px;overflow:hidden">
<div style="position:absolute;left:6.60px;top:3px;font:bold 11px/14px 'Liberation Sans', sans-serif;color:#fff;white-space:nowrap;letter-spacing:0.312px;">Membership</div>
</div>
<div style="position:absolute;left:241px;top:279px;width:123px;height:19px;overflow:hidden">
<div style="position:absolute;left:5.20px;top:3px;font:bold 11px/14px 'Liberation Sans', sans-serif;color:#fff;white-space:nowrap;letter-spacing:0.350px;">Display Name</div>
</div>
<div style="position:absolute;left:365px;top:279px;width:119px;height:19px;overflow:hidden">
<div style="position:absolute;left:5.50px;top:3px;font:bold 11px/14px 'Liberation Sans', sans-serif;color:#fff;white-space:nowrap;letter-spacing:0.001px;">Telephone</div>
</div>
<div style="position:absolute;left:485px;top:279px;width:117px;height:19px;overflow:hidden">
<div style="position:absolute;left:6.00px;top:3px;font:bold 11px/14px 'Liberation Sans', sans-serif;color:#fff;white-space:nowrap;letter-spacing:-0.126px;">LogonHours defined?</div>
</div>
<div style="position:absolute;left:21px;top:301px;width:581px;height:157px;overflow:hidden">
<svg style="position:absolute;left:2px;top:0px" width="16" height="16" viewBox="0 0 16 16" shape-rendering="crispEdges"><path fill="#000000" d="M6 1h8v1h-8zM5 2h9v1h-9zM4 3h10v1h-10zM3 4h7v1h-7zM13 4h1v1h-1zM3 5h6v1h-6zM13 5h2v1h-2zM3 6h4v1h-4zM13 6h1v1h-1zM3 7h4v1h-4zM12 7h2v1h-2zM3 8h5v1h-5zM12 8h1v1h-1zM4 9h3v1h-3zM12 9h1v1h-1zM4 10h3v1h-3zM11 10h2v1h-2zM5 11h1v1h-1zM9 11h2v1h-2z"/><path fill="#ffffff" d="M10 4h3v1h-3zM9 5h2v1h-2zM12 5h1v1h-1zM7 6h4v1h-4zM12 6h1v1h-1zM7 7h5v1h-5zM8 8h4v1h-4zM7 9h5v1h-5zM7 10h4v1h-4zM6 11h3v1h-3zM6 12h4v1h-4z"/><path fill="#0000ff" d="M11 5h1v1h-1zM11 6h1v1h-1zM4 13h2v1h-2zM11 13h1v1h-1z"/><path fill="#0000a8" d="M11 11h2v1h-2zM3 12h3v1h-3zM10 12h4v1h-4zM3 13h1v1h-1zM6 13h5v1h-5zM12 13h3v1h-3zM4 14h9v1h-9z"/></svg>
<div style="position:absolute;left:21.00px;top:1px;font:11px/14px 'Liberation Sans', sans-serif;color:#000;white-space:nowrap;letter-spacing:0.314px;">CN=Administrator,CN=Users,DC=0...</div>
<div style="position:absolute;left:226.00px;top:1px;font:11px/14px 'Liberation Sans', sans-serif;color:#000;white-space:nowrap;letter-spacing:0.817px;">Administrator</div>
<div style="position:absolute;left:350.00px;top:1px;font:11px/14px 'Liberation Sans', sans-serif;color:#000;white-space:nowrap;letter-spacing:0.700px;">512-555-5555</div>
<div style="position:absolute;left:470.00px;top:1px;font:11px/14px 'Liberation Sans', sans-serif;color:#000;white-space:nowrap;letter-spacing:0.000px;transform:scaleX(0.8645);transform-origin:0 0;">FALSE</div>
<svg style="position:absolute;left:2px;top:17px" width="16" height="16" viewBox="0 0 16 16" shape-rendering="crispEdges"><path fill="#000000" d="M6 1h8v1h-8zM5 2h9v1h-9zM4 3h10v1h-10zM3 4h7v1h-7zM13 4h1v1h-1zM3 5h6v1h-6zM13 5h2v1h-2zM3 6h4v1h-4zM13 6h1v1h-1zM3 7h4v1h-4zM12 7h2v1h-2zM3 8h5v1h-5zM12 8h1v1h-1zM4 9h3v1h-3zM12 9h1v1h-1zM4 10h3v1h-3zM11 10h2v1h-2zM5 11h1v1h-1zM9 11h2v1h-2z"/><path fill="#ffffff" d="M10 4h3v1h-3zM9 5h2v1h-2zM12 5h1v1h-1zM7 6h4v1h-4zM12 6h1v1h-1zM7 7h5v1h-5zM8 8h4v1h-4zM7 9h5v1h-5zM7 10h4v1h-4zM6 11h3v1h-3zM6 12h4v1h-4z"/><path fill="#0000ff" d="M11 5h1v1h-1zM11 6h1v1h-1zM4 13h2v1h-2zM11 13h1v1h-1z"/><path fill="#0000a8" d="M11 11h2v1h-2zM3 12h3v1h-3zM10 12h4v1h-4zM3 13h1v1h-1zM6 13h5v1h-5zM12 13h3v1h-3zM4 14h9v1h-9z"/></svg>
<div style="position:absolute;left:21.00px;top:18px;font:11px/14px 'Liberation Sans', sans-serif;color:#000;white-space:nowrap;letter-spacing:-0.052px;">CN=CPTrax,OU=Austin,OU=TEXAS,...</div>
<div style="position:absolute;left:226.00px;top:18px;font:11px/14px 'Liberation Sans', sans-serif;color:#000;white-space:nowrap;letter-spacing:0.314px;">CPTrax Alert</div>
<div style="position:absolute;left:350.00px;top:18px;font:11px/14px 'Liberation Sans', sans-serif;color:#000;white-space:nowrap;letter-spacing:0.700px;">512-555-5555</div>
<div style="position:absolute;left:470.00px;top:18px;font:11px/14px 'Liberation Sans', sans-serif;color:#000;white-space:nowrap;letter-spacing:0.000px;transform:scaleX(0.8645);transform-origin:0 0;">FALSE</div>
<svg style="position:absolute;left:2px;top:34px" width="16" height="16" viewBox="0 0 16 16" shape-rendering="crispEdges"><path fill="#000000" d="M6 1h8v1h-8zM5 2h9v1h-9zM4 3h10v1h-10zM3 4h7v1h-7zM13 4h1v1h-1zM3 5h6v1h-6zM13 5h2v1h-2zM3 6h4v1h-4zM13 6h1v1h-1zM3 7h4v1h-4zM12 7h2v1h-2zM3 8h5v1h-5zM12 8h1v1h-1zM4 9h3v1h-3zM12 9h1v1h-1zM4 10h3v1h-3zM11 10h2v1h-2zM5 11h1v1h-1zM9 11h2v1h-2z"/><path fill="#ffffff" d="M10 4h3v1h-3zM9 5h2v1h-2zM12 5h1v1h-1zM7 6h4v1h-4zM12 6h1v1h-1zM7 7h5v1h-5zM8 8h4v1h-4zM7 9h5v1h-5zM7 10h4v1h-4zM6 11h3v1h-3zM6 12h4v1h-4z"/><path fill="#0000ff" d="M11 5h1v1h-1zM11 6h1v1h-1zM4 13h2v1h-2zM11 13h1v1h-1z"/><path fill="#0000a8" d="M11 11h2v1h-2zM3 12h3v1h-3zM10 12h4v1h-4zM3 13h1v1h-1zM6 13h5v1h-5zM12 13h3v1h-3zM4 14h9v1h-9z"/></svg>
<div style="position:absolute;left:21.00px;top:35px;font:11px/14px 'Liberation Sans', sans-serif;color:#000;white-space:nowrap;letter-spacing:0.354px;">CN=Dain Waters,OU=Austin,OU=T...</div>
<div style="position:absolute;left:226.00px;top:35px;font:11px/14px 'Liberation Sans', sans-serif;color:#000;white-space:nowrap;letter-spacing:0.699px;">Dain Waters</div>
<div style="position:absolute;left:350.00px;top:35px;font:11px/14px 'Liberation Sans', sans-serif;color:#000;white-space:nowrap;letter-spacing:0.655px;">512-231-9990 x621</div>
<div style="position:absolute;left:470.00px;top:35px;font:11px/14px 'Liberation Sans', sans-serif;color:#000;white-space:nowrap;letter-spacing:0.000px;transform:scaleX(0.8645);transform-origin:0 0;">FALSE</div>
<svg style="position:absolute;left:2px;top:51px" width="16" height="16" viewBox="0 0 16 16" shape-rendering="crispEdges"><path fill="#ffff00" d="M0 0h3v1h-3zM0 1h3v1h-3zM0 2h3v1h-3z"/><path fill="#000000" d="M7 0h7v1h-7zM7 1h9v1h-9zM3 2h13v1h-13zM1 3h11v1h-11zM15 3h1v1h-1zM0 4h7v1h-7zM10 4h1v1h-1zM15 4h1v1h-1zM0 5h7v1h-7zM10 5h1v1h-1zM15 5h1v1h-1zM0 6h2v1h-2zM9 6h1v1h-1zM15 6h1v1h-1zM9 7h1v1h-1zM14 7h1v1h-1zM9 8h1v1h-1zM14 8h1v1h-1zM13 9h1v1h-1z"/><path fill="#ffffff" d="M12 3h3v1h-3zM7 4h3v1h-3zM11 4h4v1h-4zM7 5h3v1h-3zM11 5h2v1h-2zM14 5h1v1h-1zM10 6h5v1h-5zM10 7h4v1h-4zM10 8h4v1h-4zM10 9h3v1h-3zM10 10h3v1h-3z"/><path fill="#0000ff" d="M13 5h1v1h-1zM8 6h1v1h-1zM8 7h1v1h-1zM5 11h2v1h-2zM5 12h2v1h-2zM4 13h3v1h-3zM4 14h3v1h-3z"/><path fill="#008080" d="M2 6h2v1h-2zM1 7h1v1h-1zM3 7h1v1h-1zM1 8h1v1h-1zM6 9h1v1h-1zM1 10h1v1h-1zM4 11h1v1h-1z"/><path fill="#00a000" d="M4 6h4v1h-4zM4 7h1v1h-1zM7 7h1v1h-1zM6 8h1v1h-1zM6 10h2v1h-2zM4 12h1v1h-1zM7 13h2v1h-2zM3 14h1v1h-1z"/><path fill="#808000" d="M2 7h1v1h-1z"/><path fill="#00c000" d="M5 7h2v1h-2zM7 8h2v1h-2zM7 9h3v1h-3zM8 10h2v1h-2zM7 11h3v1h-3zM1 12h3v1h-3zM7 12h2v1h-2zM1 13h3v1h-3zM1 14h2v1h-2z"/><path fill="#808080" d="M0 8h1v1h-1zM0 9h1v1h-1zM0 10h1v1h-1zM0 11h1v1h-1z"/><path fill="#00ffff" d="M2 8h4v1h-4zM1 9h5v1h-5zM2 10h4v1h-4zM1 11h3v1h-3z"/><path fill="#0000a8" d="M13 10h3v1h-3zM10 11h6v1h-6zM9 12h6v1h-6zM9 13h5v1h-5zM0 14h1v1h-1zM7 14h5v1h-5zM2 15h7v1h-7z"/></svg>
<div style="position:absolute;left:21.00px;top:52px;font:11px/14px 'Liberation Sans', sans-serif;color:#000;white-space:nowrap;letter-spacing:0.349px;">CN=Domain Controllers,CN=Users,...</div>
<div style="position:absolute;left:226.00px;top:52px;font:11px/14px 'Liberation Sans', sans-serif;color:#000;white-space:nowrap;letter-spacing:0.637px;">Domain Controller...</div>
<div style="position:absolute;left:350.00px;top:52px;font:11px/14px 'Liberation Sans', sans-serif;color:#000;white-space:nowrap;letter-spacing:0.707px;">512-555-55555</div>
<div style="position:absolute;left:470.00px;top:52px;font:11px/14px 'Liberation Sans', sans-serif;color:#000;white-space:nowrap;letter-spacing:0.000px;transform:scaleX(0.8645);transform-origin:0 0;">FALSE</div>
<svg style="position:absolute;left:2px;top:68px" width="16" height="16" viewBox="0 0 16 16" shape-rendering="crispEdges"><path fill="#000000" d="M6 1h8v1h-8zM5 2h9v1h-9zM4 3h10v1h-10zM3 4h7v1h-7zM13 4h1v1h-1zM3 5h6v1h-6zM13 5h2v1h-2zM3 6h4v1h-4zM13 6h1v1h-1zM3 7h4v1h-4zM12 7h2v1h-2zM3 8h5v1h-5zM12 8h1v1h-1zM4 9h3v1h-3zM12 9h1v1h-1zM4 10h3v1h-3zM11 10h2v1h-2zM5 11h1v1h-1zM9 11h2v1h-2z"/><path fill="#ffffff" d="M10 4h3v1h-3zM9 5h2v1h-2zM12 5h1v1h-1zM7 6h4v1h-4zM12 6h1v1h-1zM7 7h5v1h-5zM8 8h4v1h-4zM7 9h5v1h-5zM7 10h4v1h-4zM6 11h3v1h-3zM6 12h4v1h-4z"/><path fill="#0000ff" d="M11 5h1v1h-1zM11 6h1v1h-1zM4 13h2v1h-2zM11 13h1v1h-1z"/><path fill="#0000a8" d="M11 11h2v1h-2zM3 12h3v1h-3zM10 12h4v1h-4zM3 13h1v1h-1zM6 13h5v1h-5zM12 13h3v1h-3zM4 14h9v1h-9z"/></svg>
<div style="position:absolute;left:21.00px;top:69px;font:11px/14px 'Liberation Sans', sans-serif;color:#000;white-space:nowrap;letter-spacing:0.353px;">CN=Ken Mauldin,OU=Austin,OU=T...</div>
<div style="position:absolute;left:226.00px;top:69px;font:11px/14px 'Liberation Sans', sans-serif;color:#000;white-space:nowrap;letter-spacing:0.715px;">Ken Mauldin</div>
<div style="position:absolute;left:350.00px;top:69px;font:11px/14px 'Liberation Sans', sans-serif;color:#000;white-space:nowrap;letter-spacing:0.700px;">512-555-5558</div>
<div style="position:absolute;left:470.00px;top:69px;font:11px/14px 'Liberation Sans', sans-serif;color:#000;white-space:nowrap;letter-spacing:0.000px;transform:scaleX(0.8645);transform-origin:0 0;">FALSE</div>
<svg style="position:absolute;left:2px;top:85px" width="16" height="16" viewBox="0 0 16 16" shape-rendering="crispEdges"><path fill="#000000" d="M6 1h8v1h-8zM5 2h9v1h-9zM4 3h10v1h-10zM3 4h7v1h-7zM13 4h1v1h-1zM3 5h6v1h-6zM13 5h2v1h-2zM3 6h4v1h-4zM13 6h1v1h-1zM3 7h4v1h-4zM12 7h2v1h-2zM3 8h5v1h-5zM12 8h1v1h-1zM4 9h3v1h-3zM12 9h1v1h-1zM4 10h3v1h-3zM11 10h2v1h-2zM5 11h1v1h-1zM9 11h2v1h-2z"/><path fill="#ffffff" d="M10 4h3v1h-3zM9 5h2v1h-2zM12 5h1v1h-1zM7 6h4v1h-4zM12 6h1v1h-1zM7 7h5v1h-5zM8 8h4v1h-4zM7 9h5v1h-5zM7 10h4v1h-4zM6 11h3v1h-3zM6 12h4v1h-4z"/><path fill="#0000ff" d="M11 5h1v1h-1zM11 6h1v1h-1zM4 13h2v1h-2zM11 13h1v1h-1z"/><path fill="#0000a8" d="M11 11h2v1h-2zM3 12h3v1h-3zM10 12h4v1h-4zM3 13h1v1h-1zM6 13h5v1h-5zM12 13h3v1h-3zM4 14h9v1h-9z"/></svg>
<div style="position:absolute;left:21.00px;top:86px;font:11px/14px 'Liberation Sans', sans-serif;color:#000;white-space:nowrap;letter-spacing:0.197px;">CN=Lance Pearson,OU=Austin,OU=...</div>
<div style="position:absolute;left:226.00px;top:86px;font:11px/14px 'Liberation Sans', sans-serif;color:#000;white-space:nowrap;letter-spacing:0.242px;">Lance Pearson</div>
<div style="position:absolute;left:350.00px;top:86px;font:11px/14px 'Liberation Sans', sans-serif;color:#000;white-space:nowrap;letter-spacing:0.655px;">512-231-9990 x633</div>
<div style="position:absolute;left:470.00px;top:86px;font:11px/14px 'Liberation Sans', sans-serif;color:#000;white-space:nowrap;letter-spacing:0.000px;transform:scaleX(0.8645);transform-origin:0 0;">FALSE</div>
<svg style="position:absolute;left:2px;top:102px" width="16" height="16" viewBox="0 0 16 16" shape-rendering="crispEdges"><path fill="#000000" d="M3 0h8v1h-8zM2 1h9v1h-9zM1 2h10v1h-10zM0 3h11v1h-11zM0 4h7v1h-7zM9 4h2v1h-2zM0 5h4v1h-4zM0 6h4v1h-4zM0 7h5v1h-5zM1 8h4v1h-4zM1 9h3v1h-3zM1 10h3v1h-3z"/><path fill="#ffffff" d="M7 4h2v1h-2zM4 5h2v1h-2zM4 6h1v1h-1zM7 8h2v1h-2zM12 8h2v1h-2zM4 9h1v1h-1zM8 9h2v1h-2zM11 9h2v1h-2zM4 10h1v1h-1zM9 10h3v1h-3zM8 11h2v1h-2zM11 11h2v1h-2zM7 12h2v1h-2zM12 12h2v1h-2z"/><path fill="#ff0000" d="M6 5h7v1h-7zM5 6h10v1h-10zM5 7h11v1h-11zM5 8h2v1h-2zM9 8h3v1h-3zM14 8h2v1h-2zM5 9h3v1h-3zM10 9h1v1h-1zM13 9h3v1h-3zM5 10h4v1h-4zM12 10h4v1h-4zM5 11h3v1h-3zM10 11h1v1h-1zM13 11h3v1h-3zM5 12h2v1h-2zM9 12h3v1h-3zM14 12h2v1h-2zM5 13h11v1h-11zM6 14h9v1h-9zM7 15h7v1h-7z"/><path fill="#0000a8" d="M0 11h5v1h-5zM1 12h4v1h-4z"/></svg>
<div style="position:absolute;left:21.00px;top:103px;font:11px/14px 'Liberation Sans', sans-serif;color:#000;white-space:nowrap;letter-spacing:0.250px;">CN=Wayne Brady,OU=San Diego,O...</div>
<div style="position:absolute;left:226.00px;top:103px;font:11px/14px 'Liberation Sans', sans-serif;color:#000;white-space:nowrap;letter-spacing:0.608px;">Wayne Brady</div>
<div style="position:absolute;left:350.00px;top:103px;font:11px/14px 'Liberation Sans', sans-serif;color:#000;white-space:nowrap;letter-spacing:0.606px;">(719) 395-5555</div>
<div style="position:absolute;left:470.00px;top:103px;font:11px/14px 'Liberation Sans', sans-serif;color:#000;white-space:nowrap;letter-spacing:0.000px;transform:scaleX(0.8645);transform-origin:0 0;">FALSE</div>
</div>
<div style="position:absolute;left:21px;top:458px;width:581px;height:17px;background:linear-gradient(#e6e6e6,#f1f1f1 20%,#f1f1f1 80%,#e9e9e9)"></div>
<svg style="position:absolute;left:27px;top:463px" width="5" height="8" viewBox="0 0 5 8"><path d="M4.5 0 L0.5 3.75 L4.5 7.5 Z" fill="#383838"/></svg>
<svg style="position:absolute;left:592px;top:463px" width="5" height="8" viewBox="0 0 5 8"><path d="M0.5 0 L4.5 3.75 L0.5 7.5 Z" fill="#383838"/></svg>
<div style="position:absolute;left:39px;top:459px;width:525px;height:15px;box-sizing:border-box;border:1px solid #929292;border-radius:2px;background:linear-gradient(#fafafa,#ededed 48%,#d9d9d9 52%,#cdcdcd 90%,#c4c4c4)"></div>
<div style="position:absolute;left:297px;top:463px;width:2px;height:7px;background:linear-gradient(90deg,#3a3a3a 50%,#9a9a9a 50%);"></div>
<div style="position:absolute;left:297px;top:467px;width:2px;height:3px;background:linear-gradient(#8a8a8a,#c0c0c0);opacity:.6"></div>
<div style="position:absolute;left:300px;top:463px;width:2px;height:7px;background:linear-gradient(90deg,#3a3a3a 50%,#9a9a9a 50%);"></div>
<div style="position:absolute;left:300px;top:467px;width:2px;height:3px;background:linear-gradient(#8a8a8a,#c0c0c0);opacity:.6"></div>
<div style="position:absolute;left:303px;top:463px;width:2px;height:7px;background:linear-gradient(90deg,#3a3a3a 50%,#9a9a9a 50%);"></div>
<div style="position:absolute;left:303px;top:467px;width:2px;height:3px;background:linear-gradient(#8a8a8a,#c0c0c0);opacity:.6"></div>
<div style="position:absolute;left:662px;top:38px;width:75px;height:23px;box-sizing:border-box;background:#1b6ea5;border:1px solid #16609a;border-radius:2px"></div>
<div style="position:absolute;left:684.30px;top:41px;font:bold 11px/14px 'Liberation Sans', sans-serif;color:#fff;white-space:nowrap;letter-spacing:-0.039px;">Close</div>
<div style="position:absolute;left:684px;top:53px;width:7px;height:1px;background:#fff"></div>
<div style="position:absolute;left:740px;top:124px;width:3px;height:78px;background:linear-gradient(#c8c8c8 0,#c8c8c8 2px,#858585 2px)"></div>
<div style="position:absolute;left:663px;top:199px;width:80px;height:3px;background:linear-gradient(90deg,#c8c8c8 0,#c8c8c8 3px,#858585 3px)"></div>
<div style="position:absolute;left:664px;top:124px;width:76px;height:75px;box-sizing:border-box;background:#fff;border:1px solid #000"></div>
<div style="position:absolute;left:670.00px;top:126px;font:bold 12.5px/14px 'Liberation Sans', sans-serif;color:#800000;white-space:nowrap;letter-spacing:0.002px;">Right Click</div>
<div style="position:absolute;left:670.00px;top:142px;font:bold 12.5px/14px 'Liberation Sans', sans-serif;color:#800000;white-space:nowrap;letter-spacing:0.898px;">over any</div>
<div style="position:absolute;left:670.00px;top:158px;font:bold 12.5px/14px 'Liberation Sans', sans-serif;color:#800000;white-space:nowrap;letter-spacing:0.487px;">list for a</div>
<div style="position:absolute;left:670.00px;top:174px;font:bold 12.5px/14px 'Liberation Sans', sans-serif;color:#800000;white-space:nowrap;letter-spacing:0.745px;">Report</div>
<svg style="position:absolute;left:698px;top:176px" width="40" height="24" viewBox="0 0 40 24">
<path d="M15.5 16.2 L9 16.2 C8.5 14.5 6.5 14 5 14.6 C3.5 15.3 4 17 5.5 17.6 C6.5 18.2 5.8 19.5 4.5 20.3" stroke="#000" stroke-width="1.1" fill="none"/>
<path d="M15 16.2 C15 13.5 18 12 21.5 12 C25.5 12 27.8 14 27.8 16.2 C27.8 18.5 25.5 20.6 21.5 20.6 C18 20.6 15 19 15 16.2 Z" fill="#000"/>
<path d="M23.2 12.3 V20.3 M23.2 16.1 H27.5" stroke="#fff" stroke-width="0.9"/>
<path d="M25.5 11.5 L26 8.5 M27.5 12 L29.5 9.5 M28.5 14 L31.5 12.5" stroke="#8a8a8a" stroke-width="1"/>
<rect x="25" y="6" width="2" height="2" fill="#ff0060"/><rect x="29.5" y="8" width="2" height="2" fill="#ff0060"/><rect x="31.5" y="11.5" width="2" height="2" fill="#ff0060"/>
</svg>
<div style="position:absolute;left:608.00px;top:217px;font:11px/14px 'Liberation Sans', sans-serif;color:#000;white-space:nowrap;letter-spacing:0.426px;">Groups</div>
<div style="position:absolute;left:608.00px;top:232px;font:11px/14px 'Liberation Sans', sans-serif;color:#000;white-space:nowrap;letter-spacing:0.471px;">Found:</div>
<div style="position:absolute;left:608.00px;top:247px;font:11px/14px 'Liberation Sans', sans-serif;color:#000;white-space:nowrap;letter-spacing:0.365px;">95</div>
<div style="position:absolute;left:661px;top:305px;width:75px;height:81px;box-sizing:border-box;background:#1b6ea5;border:1px solid #16609a;border-radius:2px"></div>
<div style="position:absolute;left:668.86px;top:308px;font:bold 11px/14px 'Liberation Sans', sans-serif;color:#fff;white-space:nowrap;letter-spacing:0.000px;">Last Logon</div>
<div style="position:absolute;left:672.31px;top:324px;font:bold 11px/14px 'Liberation Sans', sans-serif;color:#fff;white-space:nowrap;letter-spacing:0.000px;">Date/Time</div>
<div style="position:absolute;left:665.80px;top:340px;font:bold 11px/14px 'Liberation Sans', sans-serif;color:#fff;white-space:nowrap;letter-spacing:0.000px;">for All Users</div>
<div style="position:absolute;left:669.46px;top:356px;font:bold 11px/14px 'Liberation Sans', sans-serif;color:#fff;white-space:nowrap;letter-spacing:0.000px;">in Selected</div>
<div style="position:absolute;left:682.00px;top:372px;font:bold 11px/14px 'Liberation Sans', sans-serif;color:#fff;white-space:nowrap;letter-spacing:0.000px;">Group</div>
<div style="position:absolute;left:662px;top:396px;width:75px;height:81px;box-sizing:border-box;background:#1b6ea5;border:1px solid #16609a;border-radius:2px"></div>
<div style="position:absolute;left:669.86px;top:399px;font:bold 11px/14px 'Liberation Sans', sans-serif;color:#fff;white-space:nowrap;letter-spacing:0.000px;">Last Logon</div>
<div style="position:absolute;left:673.31px;top:415px;font:bold 11px/14px 'Liberation Sans', sans-serif;color:#fff;white-space:nowrap;letter-spacing:0.000px;">Date/Time</div>
<div style="position:absolute;left:668.02px;top:431px;font:bold 11px/14px 'Liberation Sans', sans-serif;color:#fff;white-space:nowrap;letter-spacing:0.000px;">for Selected</div>
<div style="position:absolute;left:687.27px;top:447px;font:bold 11px/14px 'Liberation Sans', sans-serif;color:#fff;white-space:nowrap;letter-spacing:0.000px;">User</div>
<div style="position:absolute;left:608.00px;top:431px;font:11px/14px 'Liberation Sans', sans-serif;color:#000;white-space:nowrap;letter-spacing:0.532px;">Member</div>
<div style="position:absolute;left:608.00px;top:447px;font:11px/14px 'Liberation Sans', sans-serif;color:#000;white-space:nowrap;letter-spacing:0.471px;">Found:</div>
<div style="position:absolute;left:608.00px;top:462px;font:11px/14px 'Liberation Sans', sans-serif;color:#000;white-space:nowrap;letter-spacing:0.000px;">7</div>
</div></body></html>
